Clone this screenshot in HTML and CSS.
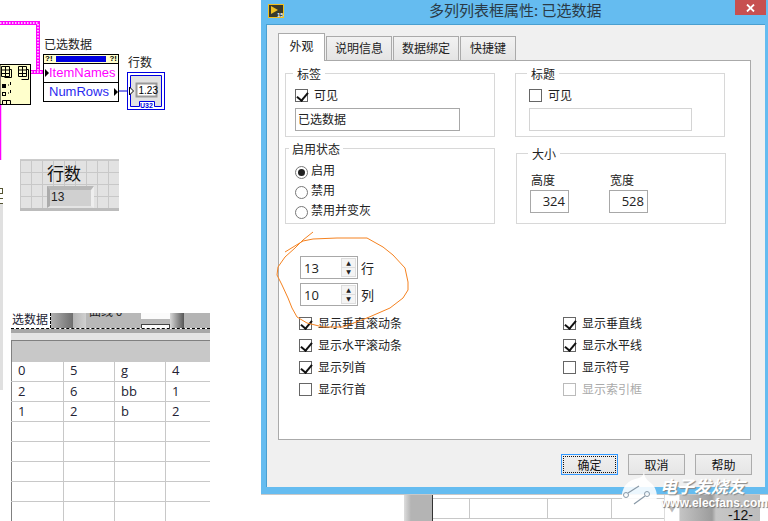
FILE: index.html
```html
<!DOCTYPE html>
<html lang="zh-CN">
<head>
    <meta charset="UTF-8">
    <title>多列列表框属性</title>
    <link rel="stylesheet" href="styles.css">
</head>
<body>
<div class="stage">

    <!-- block diagram -->
    <svg class="wires" width="210" height="205" viewBox="0 0 210 205">
        <path d="M0 23H38V72M31 72H44" fill="none" stroke="#f0f" stroke-width="4"/>
        <path d="M0 23H38V72M31 72H44" fill="none" stroke="#fff" stroke-width="1.4" stroke-dasharray="1.5 1.5"/>
        <path d="M0.5 105V160" stroke="#f0f" stroke-width="1.5"/>
        <path d="M119 91H128" stroke="#0000d0" stroke-width="1"/>
        <rect x="0" y="64.5" width="30.5" height="40" fill="#ffc" stroke="#000"/>
        <g fill="none" stroke="#000" stroke-width="1">
            <path d="M1.5 66.500h8v10h-8zM1.500 70h8M1.500 73.500h8M5.500 66.500v10M9.500 69.500h2v8h-7"/>
            <path d="M18.500 66.500h8v10h-8zM18.500 70h8M18.500 73.500h8M22.500 66.500v10M26.500 69.500h2v10h-7"/>
            <rect x="2.500" y="92.500" width="3" height="3"/>
            <path d="M2.500 100.500h8v4h-8zM6.500 100.500v4"/>
            <path d="M8 85h1M8 93h1M10.500 82v3M10.500 90v3"/>
        </g>
        <rect x="2" y="84" width="4" height="4" fill="#000"/>

        <!-- numeric indicator terminal -->
        <rect x="127.500" y="72.500" width="37" height="37" fill="#fff" stroke="#0000e0"/>
        <path d="M130.500 75.500h31v31h-7v-5h-15v5h-9z" fill="#e2e2e2" stroke="#0000e0"/>
        <rect x="136.500" y="83.500" width="20" height="13" fill="#fff" stroke="#9a9a9a" stroke-width="2"/>
        <text x="138.500" y="94" class="term-num">1.23</text>
        <path d="M129.500 87v8l4-4z" fill="#fff" stroke="#000"/>
        <text x="140" y="107.500" class="term-type">U32</text>

        <!-- end of a label cut off by the left edge -->
        <path d="M0 188.500h3M2.500 188v5M0 193.500h3M0 198.500h3M0 203.500h3" stroke="#553" stroke-width="1"/>
    </svg>

    <div class="diagram-label label-data">已选数据</div>
    <div class="diagram-label label-rows">行数</div>

    <div class="prop-node">
        <div class="prop-head"><span>?!</span><i></i><span>?!</span></div>
        <div class="prop-row prop-names">ItemNames</div>
        <div class="prop-row prop-rows">NumRows</div>
    </div>

    <!-- front panel -->
    <div class="front-panel">
        <div class="front-label">行数</div>
        <div class="front-value">13</div>
    </div>
    <div class="edge-strip"></div>

    <div class="list-box">
        <div class="list-band">
            <div class="band-name">选数据</div>
            <div class="band-shade"></div>
            <div class="band-light"></div>
            <div class="band-mid"><span class="band-clip">曲线 0</span></div>
            <div class="band-chips"><i></i><i></i></div>
            <div class="band-dark"></div>
            <div class="band-rest"></div>
        </div>
        <div class="list-under"></div>
        <table class="list-table">
            <colgroup><col class="col-a"><col class="col-b"><col class="col-b"><col></colgroup>
            <thead><tr><th colspan="4"></th></tr></thead>
            <tbody>
                <tr><td>0</td><td>5</td><td>g</td><td>4</td></tr>
                <tr><td>2</td><td>6</td><td>bb</td><td>1</td></tr>
                <tr><td>1</td><td>2</td><td>b</td><td>2</td></tr>
                <tr><td></td><td></td><td></td><td></td></tr>
                <tr><td></td><td></td><td></td><td></td></tr>
                <tr><td></td><td></td><td></td><td></td></tr>
                <tr><td></td><td></td><td></td><td></td></tr>
                <tr><td></td><td></td><td></td><td></td></tr>
            </tbody>
        </table>
    </div>

    <!-- what shows under the dialog -->
    <div class="under-strip">
        <div class="under-grey"></div>
        <div class="under-cell c1"></div>
        <div class="under-cell c2"></div>
        <div class="under-cell c3"></div>
        <div class="under-cell c4"></div>
        <div class="under-arrow">▼</div>
        <div class="under-page"><span>-12-</span></div>
    </div>

    <!-- properties dialog -->
    <div class="dialog">
        <div class="titlebar">
            <svg class="app-icon" width="16" height="14" viewBox="0 0 16 14">
                <rect x="0.500" y="0.500" width="15" height="13" fill="#3a3a2a" stroke="#f0c020"/>
                <path d="M3 2l7 4-7 4z" fill="#f0c020"/>
                <text x="9" y="12.500" class="icon-num">15</text>
            </svg>
            <div class="title-text">多列列表框属性: 已选数据</div>
            <div class="close-btn">
                <svg width="9" height="8" viewBox="0 0 9 8"><path d="M1 0.500l7 7M8 0.500l-7 7" stroke="#fff" stroke-width="1.800"/></svg>
            </div>
        </div>

        <div class="dialog-body">
            <div class="tabs">
                <div class="tab active">外观</div>
                <div class="tab t-wide">说明信息</div>
                <div class="tab t-wide">数据绑定</div>
                <div class="tab t-short">快捷键</div>
            </div>

            <div class="tab-panel">
                <div class="group-grid">
                    <div class="group g-label">
                        <span class="group-title">标签</span>
                        <label class="check-row"><span class="check on"></span>可见</label>
                        <div class="text-box">已选数据</div>
                    </div>
                    <div class="group g-label g-caption">
                        <span class="group-title">标题</span>
                        <label class="check-row"><span class="check"></span>可见</label>
                        <div class="text-box dim"></div>
                    </div>
                    <div class="group g-state">
                        <span class="group-title tight">启用状态</span>
                        <div class="radio-row"><span class="radio on"></span>启用</div>
                        <div class="radio-row"><span class="radio"></span>禁用</div>
                        <div class="radio-row"><span class="radio"></span>禁用并变灰</div>
                    </div>
                    <div class="group g-size">
                        <span class="group-title">大小</span>
                        <div class="size-fields">
                            <div class="size-field">高度<div class="num-box">324</div></div>
                            <div class="size-field">宽度<div class="num-box">528</div></div>
                        </div>
                    </div>
                </div>

                <div class="spin-row">
                    <div class="spin"><span>13</span><div class="spin-btns"><b>▲</b><b>▼</b></div></div>行
                </div>
                <div class="spin-row">
                    <div class="spin"><span>10</span><div class="spin-btns"><b>▲</b><b>▼</b></div></div>列
                </div>

                <div class="options">
                    <div class="opt"><span class="check on"></span>显示垂直滚动条</div>
                    <div class="opt"><span class="check on"></span>显示垂直线</div>
                    <div class="opt"><span class="check on"></span>显示水平滚动条</div>
                    <div class="opt"><span class="check on"></span>显示水平线</div>
                    <div class="opt"><span class="check on"></span>显示列首</div>
                    <div class="opt"><span class="check"></span>显示符号</div>
                    <div class="opt"><span class="check"></span>显示行首</div>
                    <div class="opt off"><span class="check"></span>显示索引框</div>
                </div>
            </div>

            <div class="dialog-btns">
                <button class="focus">确定</button>
                <button>取消</button>
                <button>帮助</button>
            </div>
        </div>
    </div>

    <!-- freehand mark round the row and column count -->
    <svg class="scribble" width="768" height="521" viewBox="0 0 768 521">
        <path d="M313 232L303 240L295 248L285 257L278 267L277 275L282 285L288 298L292 308L297 317L307 323L323 327L343 327L367 318L390 308L403 298L408 290L408 282L405 268L393 255L383 247L367 238L337 238L313 239L303 241L285 252" fill="none" stroke="#f58220" stroke-width="1"/>
    </svg>

    <!-- site watermark -->
    <svg class="wm-logo" width="44" height="50" viewBox="0 0 44 50">
        <path d="M25 1C25 10 29 11 34 16A17.500 17.500 0 1 1 16 10C22 9 25 7 25 1Z" fill="#fff" fill-opacity=".88"/>
        <circle cx="7" cy="26" r="2.500" fill="none" stroke="#8a9aa8"/>
        <circle cx="28" cy="25" r="2.500" fill="none" stroke="#8a9aa8"/>
        <path d="M9 24L20 17M26 27L15 35" stroke="#8a9aa8" stroke-width="1.200"/>
    </svg>
    <div class="wm-name">电子发烧友</div>
    <div class="wm-url">www.elecfans.com</div>
</div>
</body>
</html>
```

FILE: styles.css
```css
* {
    box-sizing: border-box;
}
body {
    margin: 0;
    background: #fff;
    font-family: "Noto Sans CJK SC", "Liberation Sans", sans-serif;
    font-size: 12px;
    color: #222;
}
.stage {
    position: relative;
    width: 768px;
    height: 521px;
    overflow: hidden;
    background: #fff;
}

/* block diagram */
.wires {
    position: absolute;
    left: 0;
    top: 0;
}
.term-num {
    font-family: "Liberation Sans", sans-serif;
    font-size: 10px;
    fill: #000;
}
.term-type {
    font-family: "Liberation Sans", sans-serif;
    font-size: 7px;
    font-weight: bold;
    fill: #0000e0;
}
.diagram-label {
    position: absolute;
    line-height: 14px;
    color: #222;
}
.label-data {
    left: 44px;
    top: 37px;
}
.label-rows {
    left: 128px;
    top: 55px;
}
.prop-node {
    position: absolute;
    left: 43px;
    top: 54px;
    width: 76px;
    height: 48px;
    border: 1px solid #000;
    background: #fff;
    font-family: "Liberation Sans", sans-serif;
    font-size: 13px;
}
.prop-head {
    display: flex;
    align-items: center;
    justify-content: space-between;
    height: 8px;
    padding: 0 1px;
    background: #ffc;
    font-size: 8px;
    font-weight: bold;
    line-height: 8px;
    color: #000;
}
.prop-head i {
    width: 50px;
    height: 6px;
    background: #0000e0;
}
.prop-row {
    height: 19px;
    padding-left: 5px;
    line-height: 18px;
    position: relative;
}
.prop-names {
    color: #f0f;
    border-top: 1px solid #000;
    border-bottom: 1px solid #000;
    height: 20px;
}
.prop-names::before {
    content: "";
    position: absolute;
    left: 1px;
    top: 5px;
    border: 4px solid transparent;
    border-left-color: #000;
}
.prop-rows {
    color: #2a2af0;
}
.prop-rows::after {
    content: "";
    position: absolute;
    right: -4px;
    top: 5px;
    border: 4px solid transparent;
    border-left-color: #000;
}

/* front panel */
.front-panel {
    position: absolute;
    left: 20px;
    top: 159px;
    width: 99px;
    height: 52px;
    padding: 3px 0 0 27px;
    border-top: 1px solid #ccc;
    border-bottom: 3px solid #bcbcbc;
    background-color: #e2e2e2;
    background-image:
        linear-gradient(to right, #c8c8c8 1px, transparent 1px),
        linear-gradient(to bottom, #c8c8c8 1px, transparent 1px);
    background-size: 11px 12px;
}
.front-label {
    font-size: 17px;
    line-height: 20px;
    color: #111;
}
.front-value {
    width: 47px;
    height: 22px;
    margin-top: 3px;
    padding-left: 1px;
    border-style: solid;
    border-width: 4px 3px 2px 3px;
    border-color: #b8b8b8 #eeeeee #e4e4e4 #ababab;
    background: #d0d0d0;
    font-family: "Liberation Sans", sans-serif;
    font-size: 12px;
    line-height: 15px;
    color: #222;
}
.edge-strip {
    position: absolute;
    left: 0;
    top: 204px;
    width: 3px;
    height: 186px;
    background: #e0e0e0;
}

/* list box */
.list-box {
    position: absolute;
    left: 11px;
    top: 313px;
    width: 199px;
}
.list-band {
    display: flex;
    height: 16px;
    border-bottom: 1px dashed #000;
}
.band-name {
    width: 39px;
    margin-left: 1px;
    border-right: 1px dashed #000;
    line-height: 11px;
    overflow: hidden;
    color: #223;
}
.band-shade {
    width: 22px;
    background: linear-gradient(to right, #b0b0b0, #6e6e6e);
}
.band-light {
    width: 13px;
    background: linear-gradient(to right, #b4b4b4, #d0d0d0);
}
.band-mid {
    width: 55px;
    background: #b8b8b8;
    overflow: hidden;
}
.band-clip {
    display: block;
    margin: -9px 0 0 3px;
    line-height: 14px;
}
.band-chips {
    display: flex;
    flex-direction: column;
    justify-content: space-between;
    width: 29px;
    background: #b8b8b8;
}
.band-chips i {
    height: 6px;
    background: #fbfbfb;
}
.band-chips i + i {
    height: 4px;
    border: 1px solid #444;
    border-bottom: 0;
}
.band-dark {
    width: 14px;
    background: linear-gradient(to right, #d8d8d8, #555);
}
.band-rest {
    flex: 1;
    background: #b4b4b4;
}
.list-under {
    height: 11px;
    border-top: 4px solid #a8a8a8;
    background: #e4e4e4;
}
.list-table {
    width: 199px;
    border-collapse: collapse;
    table-layout: fixed;
    border-left: 1px solid #808080;
    border-top: 1px solid #808080;
    font-family: "Open Sans", sans-serif;
    font-size: 13px;
    color: #223;
}
.col-a {
    width: 52px;
}
.col-b {
    width: 51px;
}
.list-table th {
    height: 21px;
    padding: 0;
    background: #c8c8c8;
}
.list-table td {
    height: 20px;
    padding: 0 0 2px 6px;
    border-right: 1px solid #c8c8c8;
    border-bottom: 1px solid #c8c8c8;
    line-height: 16px;
}
.list-table td:last-child {
    border-right: 0;
}

/* strip below the dialog */
.under-strip {
    position: absolute;
    left: 404px;
    top: 494px;
    width: 356px;
    height: 27px;
    display: flex;
}
.under-grey {
    width: 29px;
    border-right: 1px solid #333;
    background: linear-gradient(to right, #ddd, #b4b4b4 25%);
}
.under-cell {
    height: 21px;
    margin-top: 4px;
    border-right: 1px solid #c8c8c8;
    border-top: 1px solid #c8c8c8;
    border-bottom: 1px solid #c8c8c8;
}
.c1 { width: 37px; }
.c2 { width: 78px; }
.c3 { width: 64px; }
.c4 { width: 52px; border-right: 0; }
.under-arrow {
    width: 16px;
    padding-top: 9px;
    text-align: center;
    font-size: 8px;
    color: #bbb;
    border-right: 1px solid #ddd;
    border-left: 1px solid #ddd;
}
.under-page {
    flex: 1;
    padding: 15px 4px 0 48px;
    background: linear-gradient(to right, #c4c4c4, #9c9c9c 40%, #c6c6c6 45%, #bdbdbd);
    font-family: "Liberation Sans", sans-serif;
    font-size: 14px;
    line-height: 12px;
    color: #111;
    white-space: nowrap;
}

/* dialog */
.dialog {
    position: absolute;
    left: 261px;
    top: 0;
    width: 507px;
    height: 495px;
    padding: 0 3px 7px 5px;
    background: #65bcf0;
    border-bottom: 1px solid #c8c8c8;
}
.titlebar {
    position: relative;
    height: 25px;
    display: flex;
    padding-top: 3px;
    padding-left: 2px;
    border-bottom: 1px solid #4a9fd0;
}
.app-icon {
    flex: none;
    margin-top: 1px;
}
.icon-num {
    font-family: "Liberation Sans", sans-serif;
    font-size: 6px;
    font-weight: bold;
    fill: #fff;
}
.title-text {
    margin-left: 145px;
    margin-top: -1px;
    font-size: 15px;
    line-height: 16px;
    color: #2a3a46;
    white-space: nowrap;
}
.close-btn {
    position: absolute;
    right: -1px;
    top: 0;
    width: 31px;
    height: 15px;
    display: flex;
    align-items: center;
    justify-content: center;
    background: #c75050;
}
.dialog-body {
    height: 462px;
    padding: 8px 14px 0 11px;
    background: #f0f0f0;
    border-left: 1px solid #4a9fd0;
}
.tabs {
    display: flex;
    height: 27px;
    align-items: flex-end;
    position: relative;
    z-index: 1;
}
.tab {
    height: 24px;
    margin-right: 1px;
    border: 1px solid #aaa;
    border-bottom: 0;
    background: linear-gradient(#f2f2f2, #e4e4e4);
    text-align: center;
    line-height: 22px;
    color: #222;
}
.tab.active {
    width: 47px;
    height: 28px;
    margin-bottom: -1px;
    background: #fff;
    line-height: 24px;
    padding-bottom: 4px;
}
.t-wide {
    width: 66px;
}
.t-short {
    width: 56px;
}
.tab-panel {
    height: 380px;
    padding: 12px 0 0 6px;
    border: 1px solid #aaa;
    background: #fff;
}
.group-grid {
    display: grid;
    grid-template-columns: 210px 210px;
    grid-template-rows: 64px 76px;
    column-gap: 20px;
    row-gap: 11px;
}
.group {
    position: relative;
    border: 1px solid #d8d8d8;
}
.group-title {
    position: absolute;
    left: 7px;
    top: -7px;
    padding: 0 4px;
    background: #fff;
    line-height: 14px;
}
.group-title.tight {
    left: 3px;
    padding: 0 3px;
}
.g-caption .group-title,
.g-size .group-title {
    left: 11px;
}
.g-label {
    padding: 14px 0 0 9px;
}
.g-caption {
    padding-left: 13px;
}
.check-row {
    display: flex;
    align-items: center;
    height: 14px;
    gap: 6px;
    line-height: 14px;
}
.check {
    position: relative;
    flex: none;
    width: 13px;
    height: 13px;
    border: 1px solid #666;
    background: #fff;
}
.check.on::after {
    content: "";
    position: absolute;
    left: 3px;
    top: 0;
    width: 5px;
    height: 9px;
    border: solid #111;
    border-width: 0 2px 2px 0;
    transform: rotate(40deg);
}
.text-box {
    width: 165px;
    height: 23px;
    margin-top: 6px;
    padding-left: 2px;
    border: 1px solid #a8a8a8;
    line-height: 20px;
}
.text-box.dim {
    width: 163px;
    border-color: #d4d4d4;
}
.g-state {
    padding: 11px 0 0 9px;
}
.radio-row {
    display: flex;
    align-items: center;
    height: 20px;
    gap: 3px;
    line-height: 14px;
}
.radio {
    position: relative;
    width: 13px;
    height: 13px;
    margin-top: 5px;
    border: 1px solid #777;
    border-radius: 50%;
    background: #fff;
}
.radio.on::after {
    content: "";
    position: absolute;
    left: 2px;
    top: 2px;
    width: 7px;
    height: 7px;
    border-radius: 50%;
    background: #222;
}
.g-size {
    margin: 5px -1px 0 1px;
    padding: 19px 0 0 14px;
}
.size-fields {
    display: flex;
    gap: 41px;
}
.size-field {
    line-height: 14px;
}
.num-box {
    width: 39px;
    height: 23px;
    margin: 3px 0 0 -1px;
    padding-right: 3px;
    border: 1px solid #a8a8a8;
    text-align: right;
    font-family: "Open Sans", sans-serif;
    font-size: 13px;
    line-height: 20px;
}
.spin-row {
    display: flex;
    align-items: center;
    gap: 3px;
    height: 23px;
    margin: 4px 0 0 15px;
    font-size: 13px;
}
.group-grid + .spin-row {
    margin-top: 32px;
}
.spin {
    display: flex;
    justify-content: space-between;
    width: 58px;
    height: 23px;
    padding: 1px 1px 1px 3px;
    border: 1px solid #a8a8a8;
    font-family: "Open Sans", sans-serif;
    font-size: 13px;
    line-height: 20px;
}
.spin-btns {
    display: flex;
    flex-direction: column;
    gap: 1px;
    width: 15px;
    padding: 1px;
    background: #ddd;
}
.spin-btns b {
    flex: 1;
    background: #f4f4f4;
    font-family: "DejaVu Sans", sans-serif;
    font-size: 6px;
    font-weight: normal;
    line-height: 8px;
    text-align: center;
    color: #222;
}
.options {
    display: grid;
    grid-template-columns: 264px 1fr;
    grid-auto-rows: 22px;
    margin: 6px 0 0 14px;
}
.opt {
    display: flex;
    align-items: center;
    gap: 6px;
    line-height: 14px;
}
.opt.off {
    color: #aaa;
}
.opt.off .check {
    border-color: #bbb;
}
.dialog-btns {
    display: flex;
    justify-content: flex-end;
    gap: 10px;
    margin: 14px -1px 0 0;
}
.dialog-btns button {
    width: 57px;
    height: 21px;
    padding: 0;
    border: 1px solid #acacac;
    background: linear-gradient(#f0f0f0, #e5e5e5);
    font-family: inherit;
    font-size: 12px;
    line-height: 18px;
    color: #111;
}
.dialog-btns button.focus {
    border-color: #3399ff;
    outline: 1px dotted #111;
    outline-offset: -3px;
}

/* overlays */
.scribble {
    position: absolute;
    left: 0;
    top: 0;
    pointer-events: none;
}
.wm-logo {
    position: absolute;
    left: 619px;
    top: 469px;
}
.wm-name {
    position: absolute;
    left: 660px;
    top: 476px;
    font-size: 17px;
    font-weight: bold;
    font-style: italic;
    line-height: 20px;
    color: #fff;
    text-shadow: 1px 1px 1px #888;
    white-space: nowrap;
}
.wm-url {
    position: absolute;
    left: 661px;
    top: 496px;
    font-family: "Liberation Sans", sans-serif;
    font-size: 12px;
    font-weight: bold;
    line-height: 14px;
    color: #fff;
    text-shadow: 1px 1px 1px #777;
    white-space: nowrap;
}
```
